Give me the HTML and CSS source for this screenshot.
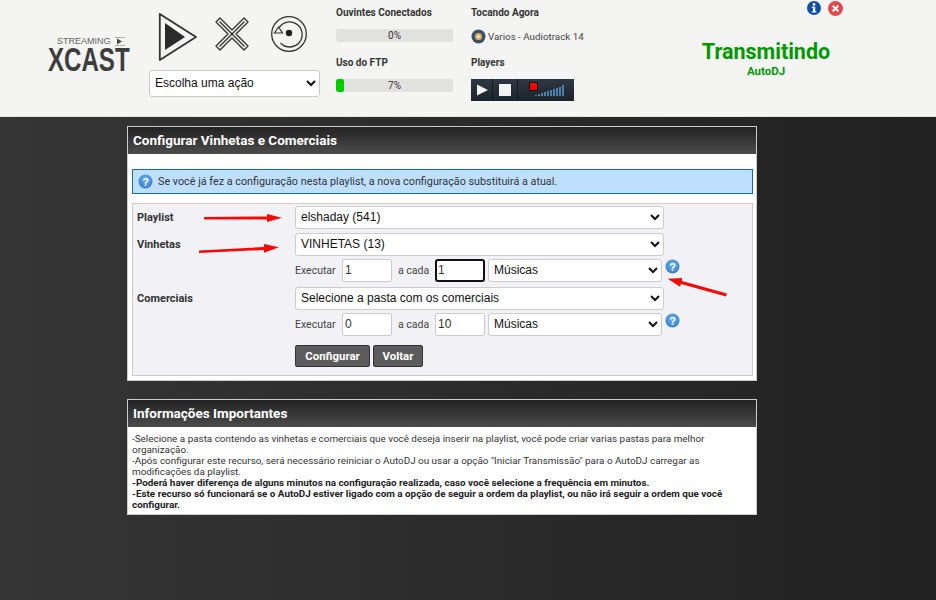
FILE: index.html
```html
<!DOCTYPE html>
<html lang="pt-BR">
<head>
<meta charset="utf-8">
<title>Configurar Vinhetas e Comerciais</title>
<link rel="stylesheet" href="styles.css">
</head>
<body>
<header class="topbar">
  <div class="logo">
    <div class="logo-small">STREAMING<svg class="logo-mark" width="10" height="9" viewBox="0 0 10 9"><path d="M0 .5h10M0 8.500h10" stroke="#aaa" stroke-width="1"/><path d="M2 1.500 7 4.500 2 7.500z" fill="#444"/></svg></div>
    <div class="logo-big">XCAST</div>
  </div>
  <div class="actions">
    <div class="action-icons">
      <svg class="icon-play" width="40" height="48" viewBox="0 0 40 48"><path d="M1.800 1 38 24 1.800 47z" fill="#f4f4f2" stroke="#333" stroke-width="1.800" stroke-linejoin="round"/><path d="M7 10 27 24 7 37z" fill="#2b2b2b"/></svg>
      <svg class="icon-stop" width="34" height="34" viewBox="0 0 34 34"><g fill="none" stroke="#333" stroke-width="1.400" stroke-linejoin="round"><path d="M5 1 17 13 29 1 33 5 21 17 33 29 29 33 17 21 5 33 1 29 13 17 1 5z"/><path d="M4.500 4.500 29.500 29.500M29.500 4.500 4.500 29.500"/></g></svg>
      <svg class="icon-reload" width="36" height="36" viewBox="0 0 36 36"><circle cx="18" cy="18" r="17.300" fill="none" stroke="#333" stroke-width="1.300"/><path d="M7 14A12.500 12.500 0 1 1 9.500 27" fill="none" stroke="#333" stroke-width="1.300"/><path d="M7.500 11 11.500 17H3.500z" fill="#f4f4f2" stroke="#333" stroke-width="1.200"/><circle cx="18" cy="17" r="3.200" fill="#222"/></svg>
    </div>
    <select class="action-select"><option>Escolha uma ação</option></select>
  </div>
  <div class="stats">
    <div class="stat-title">Ouvintes Conectados</div>
    <div class="bar"><span class="bar-text">0%</span></div>
    <div class="stat-title stat-second">Uso do FTP</div>
    <div class="bar"><div class="bar-fill"></div><span class="bar-text">7%</span></div>
  </div>
  <div class="now">
    <div class="stat-title">Tocando Agora</div>
    <div class="track">
      <svg width="15" height="15" viewBox="0 0 15 15"><circle cx="7.500" cy="7.500" r="7" fill="#3c5068"/><circle cx="7.500" cy="7.500" r="3.500" fill="#d9b45c"/><circle cx="7.500" cy="7.500" r="1.300" fill="#f4f4f2"/></svg>
      <span>Varios - Audiotrack 14</span>
    </div>
    <div class="stat-title stat-players">Players</div>
    <div class="player">
      <div class="player-btn"><svg width="12" height="12" viewBox="0 0 12 12"><path d="M1 .500 12 6 1 11.500z" fill="#f2f2f2"/></svg></div>
      <div class="player-btn player-btn-stop"><div class="player-stop"></div></div>
      <div class="player-meter">
        <div class="player-rec"></div>
        <svg class="player-bars" width="32" height="12" viewBox="0 0 32 12"><path d="M1 11h2v1H1zM4 10h2v2H4zM7 9h2v3H7zM10 8h2v4h-2zM13 7h2v5h-2zM16 6h2v6h-2zM19 5h2v7h-2zM22 4h2v8h-2zM25 3h2v9h-2zM28 1h2v11h-2z" fill="#4b7fae"/></svg>
      </div>
    </div>
  </div>
  <div class="status">
    <div class="top-icons">
      <svg width="14" height="14" viewBox="0 0 14 14"><circle cx="7" cy="7" r="7" fill="#0f4fa3"/><circle cx="7" cy="3.500" r="1.400" fill="#fff"/><path d="M4.800 5.800H8.200V10.200H9.300V11.500H4.800V10.200H6V7.100H4.800z" fill="#fff"/></svg>
      <svg width="15" height="15" viewBox="0 0 15 15"><circle cx="7.500" cy="7.500" r="7.500" fill="#e0494f"/><path d="M4.700 4.700 10.300 10.300M10.300 4.700 4.700 10.300" stroke="#fff" stroke-width="2"/></svg>
    </div>
    <div class="status-main">Transmitindo</div>
    <div class="status-sub">AutoDJ</div>
  </div>
</header>

<main class="content">
  <section class="card">
    <h2 class="card-title">Configurar Vinhetas e Comerciais</h2>
    <div class="card-body">
      <div class="notice">
        <svg class="help" width="15" height="15" viewBox="0 0 15 15"><use href="#help-icon"/></svg>
        <span>Se você já fez a configuração nesta playlist, a nova configuração substituirá a atual.</span>
      </div>
      <form class="panel">
        <label class="field-label">Playlist</label>
        <select class="wide"><option>elshaday (541)</option></select>

        <label class="field-label field-gap">Vinhetas</label>
        <select class="wide field-gap"><option>VINHETAS (13)</option></select>

        <div class="freq field-col">
          <span class="freq-label">Executar</span>
          <input class="num" value="1">
          <span class="freq-every">a cada</span>
          <input class="num focused" value="1">
          <select class="unit"><option>Músicas</option></select>
          <svg class="help freq-help" width="15" height="15" viewBox="0 0 15 15"><use href="#help-icon"/></svg>
        </div>

        <label class="field-label field-gap-l">Comerciais</label>
        <select class="wide field-gap-l"><option>Selecione a pasta com os comerciais</option></select>

        <div class="freq field-col">
          <span class="freq-label">Executar</span>
          <input class="num" value="0">
          <span class="freq-every">a cada</span>
          <input class="num" value="10">
          <select class="unit"><option>Músicas</option></select>
          <svg class="help freq-help" width="15" height="15" viewBox="0 0 15 15"><use href="#help-icon"/></svg>
        </div>

        <div class="buttons field-col">
          <button type="button" class="btn">Configurar</button>
          <button type="button" class="btn">Voltar</button>
        </div>
      </form>
    </div>
  </section>

  <section class="card card-info">
    <h2 class="card-title">Informações Importantes</h2>
    <div class="info-body">
      -Selecione a pasta contendo as vinhetas e comerciais que você deseja inserir na playlist, você pode criar varias pastas para melhor organização.<br>
      -Após configurar este recurso, será necessário reiniciar o AutoDJ ou usar a opção "Iniciar Transmissão" para o AutoDJ carregar as modificações da playlist.<br>
      <strong>-Poderá haver diferença de alguns minutos na configuração realizada, caso você selecione a frequência em minutos.</strong><br>
      <strong>-Este recurso só funcionará se o AutoDJ estiver ligado com a opção de seguir a ordem da playlist, ou não irá seguir a ordem que você configurar.</strong>
    </div>
  </section>
</main>

<svg class="arrows" width="936" height="600" viewBox="0 0 936 600">
  <g fill="#f50a0a">
    <path d="M204 217 267 216.500 267 214 282 217.700 267 222 267 219.500 204 219.500z"/>
    <path d="M199 250.500 264 247 264 244 279 247.200 264 252.700 264 250 199 253z"/>
    <path d="M727 293.500 682 281 682 278 667.700 278.700 680 286.700 681 284 726 296.500z"/>
  </g>
</svg>

<svg class="defs" width="0" height="0">
  <defs>
    <radialGradient id="help-grad" cx="50%" cy="35%" r="70%"><stop offset="0" stop-color="#6db1ea"/><stop offset="1" stop-color="#2f7cc4"/></radialGradient>
    <g id="help-icon">
      <circle cx="7.500" cy="7.500" r="7" fill="url(#help-grad)"/>
      <text x="7.500" y="11.500" text-anchor="middle" class="help-mark">?</text>
    </g>
  </defs>
</svg>
</body>
</html>
```
FILE: styles.css
```css
* { box-sizing: border-box; }
html, body { margin: 0; padding: 0; }
body {
  height: 600px;
  overflow: hidden;
  position: relative;
  background: linear-gradient(90deg, #353535, #212121);
  font-family: Roboto, sans-serif;
  font-size: 11px;
  color: #222;
}
.topbar {
  height: 117px;
  background: #f4f4f2;
  display: flex;
  align-items: flex-start;
  border-bottom: 1px solid #e4e4e2;
}
.logo {
  width: 82px;
  margin: 36px 0 0 48px;
  color: #3d3d3d;
  font-family: "Liberation Sans", sans-serif;
}
.logo-small {
  font-size: 9px;
  line-height: 10px;
  color: #666;
  padding-left: 9px;
  white-space: nowrap;
  display: flex;
  align-items: center;
  gap: 4px;
}
.logo-big {
  font-size: 33px;
  font-weight: 700;
  line-height: 27px;
  white-space: nowrap;
  transform: scaleX(0.73);
  transform-origin: left center;
}
.actions {
  width: 171px;
  margin: 13px 0 0 19px;
}
.action-icons {
  display: flex;
  align-items: flex-start;
  height: 57px;
}
.icon-play { margin-left: 9px; }
.icon-stop { margin: 4px 0 0 17px; }
.icon-reload { margin: 3px 0 0 22px; }
select {
  appearance: auto;
  background: #fff;
  border: 1px solid #ccc;
  border-radius: 3px;
  font-family: "Liberation Sans", sans-serif;
  font-size: 12px;
  color: #111;
  padding: 0 0 2px 1px;
}
.action-select {
  display: block;
  width: 171px;
  height: 27px;
}
.stats {
  width: 117px;
  margin: 6px 0 0 16px;
}
.now {
  width: 150px;
  margin: 6px 0 0 18px;
}
.stat-title {
  font-weight: 700;
  font-size: 10px;
  line-height: 13px;
  color: #333;
}
.stat-second { margin-top: 14px; }
.stat-players { margin-top: 12px; }
.bar {
  position: relative;
  height: 13px;
  margin-top: 10px;
  background: #e1e1df;
  border-radius: 2px;
  overflow: hidden;
}
.bar-text {
  position: absolute;
  inset: 0;
  text-align: center;
  font-size: 10px;
  line-height: 13px;
  color: #333;
}
.bar-fill {
  width: 8px;
  height: 100%;
  background: #0c0;
  border-radius: 2px;
}
.track {
  display: flex;
  align-items: center;
  gap: 2px;
  height: 15px;
  margin-top: 10px;
  color: #444;
  font-size: 9.800px;
}
.player {
  display: flex;
  width: 103px;
  height: 22px;
  margin-top: 10px;
  background: linear-gradient(#2e3844, #1c232b);
}
.player-btn {
  width: 22px;
  display: flex;
  align-items: center;
  justify-content: center;
  border-right: 1px solid #141a20;
  flex: none;
}
.player-btn-stop { width: 25px; }
.player-stop { width: 12px; height: 12px; background: #f2f2f2; }
.player-meter { position: relative; flex: 1; }
.player-rec {
  position: absolute;
  left: 11px;
  top: 3px;
  width: 9px;
  height: 9px;
  background: #f00;
  border: 1px solid #111;
}
.player-bars { position: absolute; left: 16px; bottom: 5px; }
.status {
  flex: 1;
  position: relative;
  text-align: center;
  padding-right: 25px;
  padding-top: 38px;
  color: #090;
}
.top-icons {
  position: absolute;
  left: 186px;
  top: 1px;
  display: flex;
  gap: 7px;
}
.status-main { font-size: 21.500px; font-weight: 700; line-height: 27px; }
.status-sub { font-size: 11.500px; font-weight: 700; line-height: 13px; }
.content {
  width: 630px;
  margin: 9px 0 0 127px;
}
.card {
  background: #fff;
  border: 1px solid #ccc;
}
.card-info { margin-top: 18px; }
.card-title {
  margin: 0;
  height: 27px;
  padding-left: 5px;
  font-size: 13.500px;
  line-height: 26px;
  font-weight: 700;
  color: #fff;
  background: linear-gradient(#222, #4c4c4c);
}
.card-body { padding: 15px 3px 4px 4px; }
.notice {
  display: flex;
  align-items: center;
  gap: 5px;
  height: 25px;
  padding-left: 5px;
  background: #bfdfff;
  border: 1px solid #1a6a9c;
  font-size: 10.800px;
  color: #333;
}
.help { flex: none; }
.help-mark {
  font: 700 11px "Liberation Sans", sans-serif;
  fill: #fff;
}
.panel {
  display: grid;
  grid-template-columns: 158px 1fr;
  align-items: center;
  align-content: start;
  margin-top: 9px;
  height: 173px;
  padding: 2px 0 0 4px;
  background: #f2f2f6;
  border: 1px solid #ccc;
}
.field-label {
  font-weight: 700;
  font-size: 11px;
  color: #333;
}
.wide { width: 369px; height: 23px; }
.field-gap { margin-top: 4px; }
.field-gap-l { margin-top: 5px; }
.field-col { grid-column: 2; }
.freq {
  display: flex;
  align-items: flex-start;
  height: 23px;
  margin-top: 3px;
}
.freq-label { font-size: 10.500px; line-height: 23px; color: #444; width: 47px; }
.freq-every { font-size: 10.500px; line-height: 23px; color: #444; width: 43px; padding-left: 6px; }
.num {
  width: 50px;
  height: 23px;
  border: 1px solid #ccc;
  border-radius: 2px;
  background: #fff;
  padding: 0 0 2px 2px;
  font-family: "Liberation Sans", sans-serif;
  font-size: 12px;
  color: #333;
}
.focused { border: 2px solid #111; border-radius: 3px; padding-left: 1px; outline: none; }
.unit { width: 174px; height: 23px; margin-left: 3px; }
.freq-help { margin: 0 0 0 3px; }
.buttons {
  display: flex;
  gap: 3px;
  margin-top: 9px;
}
.btn {
  width: 75px;
  height: 22px;
  padding: 0;
  background: #5c5c5c;
  border: 1px solid #333;
  border-radius: 2px;
  color: #fff;
  font-family: Roboto, sans-serif;
  font-weight: 700;
  font-size: 11.400px;
}
.btn + .btn { width: 50px; }
.info-body {
  padding: 6px 4px 4px 4px;
  font-size: 9.900px;
  line-height: 11px;
  color: #333;
}
.info-body strong { color: #222; }
.arrows {
  position: absolute;
  left: 0;
  top: 0;
  pointer-events: none;
}
.defs { position: absolute; }
```
